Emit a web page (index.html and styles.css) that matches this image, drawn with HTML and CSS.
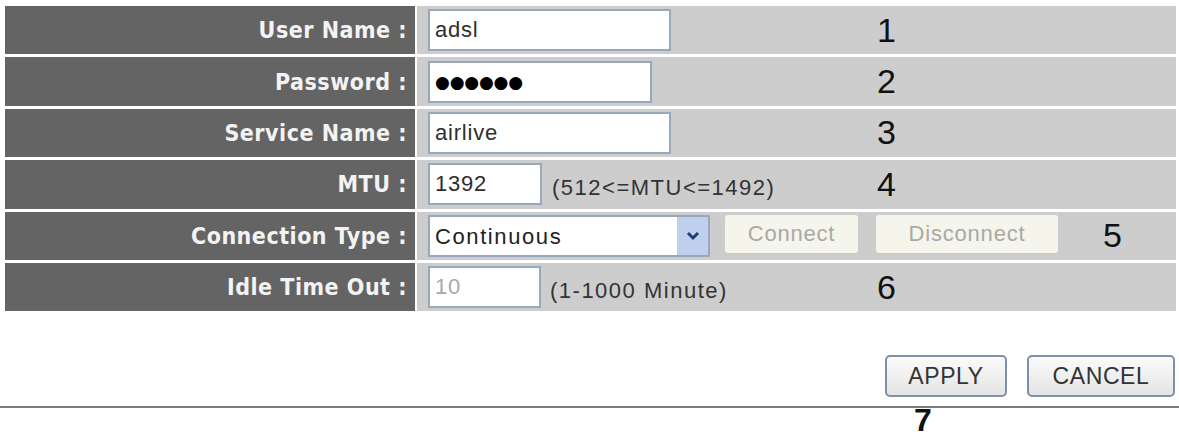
FILE: index.html
```html
<!DOCTYPE html>
<html>
<head>
<meta charset="utf-8">
<title>WAN PPPoE</title>
<link rel="stylesheet" href="styles.css">
</head>
<body>
<div class="page">
  <div class="form">
    <div class="row">
      <div class="label">User Name :</div>
      <div class="field">
        <div class="input w-user">adsl</div>
        <span class="mark m-std">1</span>
      </div>
    </div>
    <div class="row">
      <div class="label">Password :</div>
      <div class="field">
        <div class="input w-pass"><span class="dots">●●●●●●</span></div>
        <span class="mark m-std">2</span>
      </div>
    </div>
    <div class="row">
      <div class="label">Service Name :</div>
      <div class="field">
        <div class="input w-user">airlive</div>
        <span class="mark m-std">3</span>
      </div>
    </div>
    <div class="row">
      <div class="label">MTU :</div>
      <div class="field">
        <div class="input w-mtu">1392</div>
        <span class="hint">(512&lt;=MTU&lt;=1492)</span>
        <span class="mark m-std">4</span>
      </div>
    </div>
    <div class="row">
      <div class="label">Connection Type :</div>
      <div class="field">
        <div class="select">
          <span class="select-text">Continuous</span>
          <span class="select-arrow">
            <svg width="14" height="10" viewBox="0 0 14 10"><path d="M2 2 L7 7 L12 2" fill="none" stroke="#1f3a78" stroke-width="3"/></svg>
          </span>
        </div>
        <div class="btn-dis w-connect">Connect</div>
        <div class="btn-dis w-disconnect">Disconnect</div>
        <span class="mark m-five">5</span>
      </div>
    </div>
    <div class="row">
      <div class="label">Idle Time Out :</div>
      <div class="field">
        <div class="input w-idle disabled">10</div>
        <span class="hint hint-idle">(1-1000 Minute)</span>
        <span class="mark m-std">6</span>
      </div>
    </div>
  </div>
  <div class="actions">
    <div class="btn">APPLY</div>
    <div class="btn btn-cancel">CANCEL</div>
  </div>
  <div class="rule"></div>
  <div class="seven">7</div>
</div>
</body>
</html>
```
FILE: styles.css
```css
html, body {
  margin: 0;
  padding: 0;
  background: #ffffff;
}
body {
  font-family: "Liberation Sans", Arial, sans-serif;
  overflow: hidden;
}
.page {
  width: 1179px;
  height: 434px;
  padding-top: 6px;
  box-sizing: border-box;
}
.form {
  display: flex;
  flex-direction: column;
  gap: 3px;
  margin-left: 5px;
  width: 1171px;
}
.row {
  display: flex;
  gap: 2px;
  height: 48.4px;
}
.label {
  width: 410px;
  flex: none;
  background: #646464;
  color: #f3f3f3;
  font-family: "DejaVu Sans Condensed", "DejaVu Sans", Verdana, sans-serif;
  font-stretch: condensed;
  font-weight: bold;
  font-size: 23px;
  letter-spacing: 0.5px;
  text-align: right;
  padding-right: 8px;
  box-sizing: border-box;
  display: flex;
  align-items: center;
  justify-content: flex-end;
}
.field {
  flex: 1;
  background: #cdcdcd;
  display: flex;
  align-items: center;
  padding-left: 11px;
  position: relative;
}
.input {
  height: 42px;
  box-sizing: border-box;
  border: 2px solid #98a9bd;
  background: #ffffff;
  padding-left: 5px;
  font-size: 22px;
  letter-spacing: 0.8px;
  color: #2e2e2e;
  display: flex;
  align-items: center;
}
.w-user { width: 243px; }
.w-pass { width: 224px; }
.w-mtu { width: 114px; }
.w-idle { width: 113px; }
.disabled { color: #a9a9a9; }
.dots {
  font-family: "DejaVu Sans", sans-serif;
  font-size: 17px;
  letter-spacing: -0.2px;
  color: #000;
}
.hint {
  margin-left: 10px;
  font-size: 22px;
  letter-spacing: 1.5px;
  color: #333333;
  padding-top: 8px;
}
.hint-idle { margin-left: 9px; }
.select {
  width: 282px;
  height: 42px;
  box-sizing: border-box;
  border: 2px solid #98a9bd;
  background: #ffffff;
  display: flex;
  align-items: stretch;
}
.select-text {
  flex: 1;
  padding-left: 5px;
  font-size: 22px;
  letter-spacing: 1.6px;
  color: #222;
  display: flex;
  align-items: center;
  padding-top: 3px;
}
.select-arrow {
  width: 31px;
  background: #bfcfee;
  display: flex;
  align-items: center;
  justify-content: center;
}
.btn-dis {
  height: 38px;
  box-sizing: border-box;
  background: #f5f5ec;
  border-radius: 3px;
  color: #a9a9a6;
  font-size: 22px;
  letter-spacing: 0.8px;
  display: flex;
  align-items: center;
  justify-content: center;
  margin-top: -4px;
}
.w-connect { width: 133px; margin-left: 15px; }
.w-disconnect { width: 182px; margin-left: 18px; }
.mark {
  position: absolute;
  top: 0;
  bottom: 0;
  display: flex;
  align-items: center;
  font-size: 34px;
  color: #111111;
}
.m-std { left: 460px; }
.m-five { left: 686px; }
.actions {
  display: flex;
  justify-content: flex-end;
  gap: 20px;
  padding-right: 4px;
  margin-top: 44px;
}
.btn {
  width: 122px;
  height: 42px;
  box-sizing: border-box;
  border: 2px solid #7c90aa;
  border-radius: 5px;
  background: linear-gradient(#fbfbfb, #e4e4e4);
  font-size: 23px;
  letter-spacing: 0.6px;
  color: #333333;
  display: flex;
  align-items: center;
  justify-content: center;
}
.btn-cancel { width: 148px; }
.rule {
  margin-top: 9px;
  height: 2px;
  background: #7a7a7a;
}
.seven {
  padding-left: 914px;
  font-size: 32px;
  line-height: 24px;
  color: #111111;
  font-weight: bold;
}
```
